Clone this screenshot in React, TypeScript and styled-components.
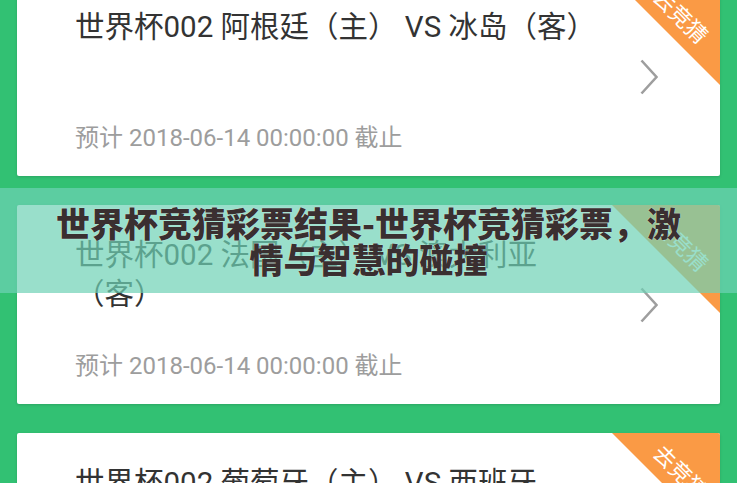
import React from 'react';
import styled, { createGlobalStyle } from 'styled-components';

const GlobalStyle = createGlobalStyle`
  html, body {
    margin: 0;
    padding: 0;
    background: #32c173;
  }
  body {
    font-family: Roboto, "Noto Sans CJK SC", sans-serif;
  }
`;

const Screen = styled.div`
  position: relative;
  width: 737px;
  height: 483px;
  overflow: hidden;
  background: #32c173;
`;

const MatchList = styled.div`
  display: flex;
  flex-direction: column;
  gap: 29px;
  padding: 0 17px;
  margin-top: -23px;
`;

const Card = styled.div`
  position: relative;
  display: grid;
  grid-template-columns: 1fr 18px;
  column-gap: 30px;
  align-items: center;
  height: 199px;
  box-sizing: border-box;
  padding: 0 62px 0 58px;
  background: #fff;
  border-radius: 2px;
  box-shadow: 0 1px 3px rgba(0, 0, 0, 0.14);
  overflow: hidden;
`;

const Info = styled.div`
  display: flex;
  flex-direction: column;
  height: 100%;
  box-sizing: border-box;
  padding: 31px 0 23px;
`;

const Title = styled.div`
  font-size: 29.5px;
  line-height: 39px;
  color: #333;
`;

const Deadline = styled.div`
  margin-top: auto;
  font-size: 24px;
  line-height: 30px;
  color: #9d9d9d;
`;

const Corner = styled.div`
  position: absolute;
  top: 0;
  right: 0;
  width: 108px;
  height: 108px;
  background: #fa9a45;
  clip-path: polygon(0 0, 100% 0, 100% 100%);
`;

const CornerLabel = styled.span`
  position: absolute;
  left: 70px;
  top: 38px;
  transform: translate(-50%, -50%) rotate(45deg);
  font-size: 22px;
  line-height: 1;
  color: #fff;
  white-space: nowrap;
  font-family: "Noto Sans CJK SC", sans-serif;
`;

const Chevron = () => (
  <svg width="18" height="36" viewBox="0 0 18 36">
    <polyline points="1.5,1.5 16.5,18 1.5,34.5" fill="none" stroke="#9e9e9e" strokeWidth="2.6" />
  </svg>
);

const Banner = styled.div`
  position: absolute;
  left: 0;
  right: 0;
  top: 188px;
  height: 105px;
  display: flex;
  align-items: center;
  justify-content: center;
  padding: 0 48px;
  background: rgba(110, 209, 181, 0.7);
`;

const BannerText = styled.h1`
  margin: 0;
  font-family: "Noto Sans CJK SC", sans-serif;
  font-weight: 900;
  font-size: 34px;
  line-height: 36px;
  color: #3a2f30;
  text-align: center;
  text-shadow: 0 0 1px rgba(255, 255, 255, 0.9);
`;

interface Match {
  title: string;
  deadline: string;
}

const matches: Match[] = [
  { title: '世界杯002 阿根廷（主） VS 冰岛（客）', deadline: '预计 2018-06-14 00:00:00 截止' },
  { title: '世界杯002 法国（主） VS 澳大利亚（客）', deadline: '预计 2018-06-14 00:00:00 截止' },
  { title: '世界杯002 葡萄牙（主） VS 西班牙（客）', deadline: '预计 2018-06-14 00:00:00 截止' },
];

const App: React.FC = () => (
  <Screen>
    <GlobalStyle />
    <MatchList>
      {matches.map((m, i) => (
        <Card key={i}>
          <Info>
            <Title>{m.title}</Title>
            <Deadline>{m.deadline}</Deadline>
          </Info>
          <Chevron />
          <Corner>
            <CornerLabel>去竞猜</CornerLabel>
          </Corner>
        </Card>
      ))}
    </MatchList>
    <Banner>
      <BannerText>世界杯竞猜彩票结果-世界杯竞猜彩票，激情与智慧的碰撞</BannerText>
    </Banner>
  </Screen>
);

export default App;
